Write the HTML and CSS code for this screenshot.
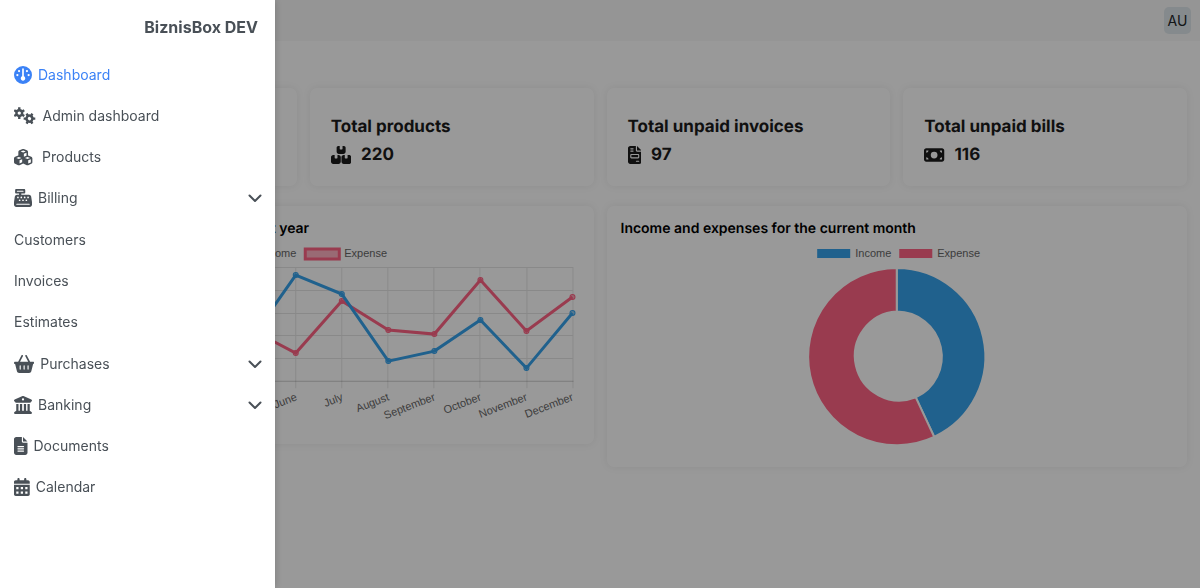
FILE: index.html
```html
<!DOCTYPE html>
<html lang="en">
<head>
<meta charset="utf-8">
<title>BiznisBox DEV</title>
<meta name="viewport" content="width=device-width, initial-scale=1">
<link rel="stylesheet" href="styles.css">
</head>
<body>
<div class="page">
  <header class="topbar">
    <button class="avatar" type="button" aria-label="Account AU">AU</button>
  </header>
  <main class="content">
    <section class="stats">
      <article class="card stat"></article>
      <article class="card stat">
        <h2 class="stat-title">Total products</h2>
        <p class="stat-value"><svg class="icon" viewBox="0 0 576 512" aria-hidden="true"><path d="M248 0H208C181.500 0 160 21.500 160 48V160c0 35.300 28.700 64 64 64H352c35.300 0 64-28.700 64-64V48c0-26.500-21.500-48-48-48H328V80c0 8.800-7.200 16-16 16H264c-8.800 0-16-7.200-16-16V0zM64 256c-35.300 0-64 28.700-64 64V448c0 35.300 28.700 64 64 64H214c35.300 0 64-28.700 64-64V320c0-35.300-28.700-64-64-64H184v80c0 8.800-7.200 16-16 16H120c-8.800 0-16-7.200-16-16V256H64zM362 512H512c35.300 0 64-28.700 64-64V320c0-35.300-28.700-64-64-64H472v80c0 8.800-7.200 16-16 16H408c-8.800 0-16-7.200-16-16V256H362c-35.300 0-64 28.700-64 64V448c0 35.300 28.700 64 64 64z"/></svg>220</p>
      </article>
      <article class="card stat">
        <h2 class="stat-title">Total unpaid invoices</h2>
        <p class="stat-value"><svg class="icon" viewBox="0 0 384 512" aria-hidden="true"><path fill-rule="evenodd" d="M64 0C28.700 0 0 28.700 0 64V448c0 35.300 28.700 64 64 64H320c35.300 0 64-28.700 64-64V160H256c-17.700 0-32-14.300-32-32V0H64zM256 0V128H384L256 0zM80 64h64a16 16 0 0 1 0 32H80a16 16 0 0 1 0-32zM80 128h64a16 16 0 0 1 0 32H80a16 16 0 0 1 0-32zM96 224H288c17.700 0 32 14.300 32 32v64c0 17.700-14.300 32-32 32H96c-17.700 0-32-14.300-32-32V256c0-17.700 14.300-32 32-32zM96 256v64H288V256H96zM240 416h64a16 16 0 0 1 0 32H240a16 16 0 0 1 0-32z"/></svg>97</p>
      </article>
      <article class="card stat">
        <h2 class="stat-title">Total unpaid bills</h2>
        <p class="stat-value"><svg class="icon" viewBox="0 0 576 512" aria-hidden="true"><path fill-rule="evenodd" d="M64 64C28.700 64 0 92.700 0 128V384c0 35.300 28.700 64 64 64H512c35.300 0 64-28.700 64-64V128c0-35.300-28.700-64-64-64H64zM128 384H64V320c35.300 0 64 28.700 64 64zM64 192V128h64c0 35.300-28.700 64-64 64zM448 384c0-35.300 28.700-64 64-64v64H448zM512 192c-35.300 0-64-28.700-64-64h64v64zM288 160a96 96 0 1 1 0 192 96 96 0 1 1 0-192z"/></svg>116</p>
      </article>
    </section>

    <section class="charts">
      <article class="card chart">
        <h2 class="chart-title">Income and expenses for the current year</h2>
        <svg class="plot" viewBox="0 0 552 190" role="img" aria-label="Income and expenses by month">
          <g class="legend">
            <rect class="key income" x="194" y="9" width="34" height="10"/>
            <text x="233" y="17">Income</text>
            <rect class="key expense" x="278" y="9" width="34" height="10"/>
            <text x="317" y="17">Expense</text>
          </g>
          <path class="grid" d="M38 27.500H546M38 50.500H546M38 73.500H546M38 95.500H546M38 118.500H546M84.500 27V148M130.500 27V148M176.500 27V148M222.500 27V148M268.500 27V148M314.500 27V148M360.500 27V148M406.500 27V148M452.500 27V148M499.500 27V148M545.500 27V148"/>
          <path class="grid axis" d="M38 141H546M38.500 27V148"/>
          <polyline class="line expense" points="38,80 84,62 130,96 176,70 223,89 268.500,113 314.500,61 361,90 407,94 453,40 499,91 545,57"/>
          <g class="dots expense"><circle cx="268.500" cy="113" r="2.500"/><circle cx="314.500" cy="61" r="2.500"/><circle cx="361" cy="90" r="2.500"/><circle cx="407" cy="94" r="2.500"/><circle cx="453" cy="40" r="2.500"/><circle cx="499" cy="91" r="2.500"/><circle cx="545" cy="57" r="2.500"/></g>
          <polyline class="line income" points="38,110 84,90 130,70 176,104 223,100 268.500,35 314.500,54 361,121 407,111 453,80 499,128 545,73"/>
          <g class="dots income"><circle cx="268.500" cy="35" r="2.500"/><circle cx="314.500" cy="54" r="2.500"/><circle cx="361" cy="121" r="2.500"/><circle cx="407" cy="111" r="2.500"/><circle cx="453" cy="80" r="2.500"/><circle cx="499" cy="128" r="2.500"/><circle cx="545" cy="73" r="2.500"/></g>
          <g class="months">
            <text transform="translate(269 156) rotate(-21)" y="4">June</text>
            <text transform="translate(315 156) rotate(-21)" y="4">July</text>
            <text transform="translate(361 156) rotate(-21)" y="4">August</text>
            <text transform="translate(407 156) rotate(-21)" y="4">September</text>
            <text transform="translate(453 156) rotate(-21)" y="4">October</text>
            <text transform="translate(499 156) rotate(-21)" y="4">November</text>
            <text transform="translate(545 156) rotate(-21)" y="4">December</text>
          </g>
        </svg>
      </article>
      <article class="card chart">
        <h2 class="chart-title">Income and expenses for the current month</h2>
        <svg class="plot" viewBox="0 0 552 213" role="img" aria-label="Income and expenses this month">
          <g class="legend">
            <rect class="fill income" x="196" y="9" width="33" height="9"/>
            <text x="234" y="17">Income</text>
            <rect class="fill expense" x="278" y="9" width="33" height="9"/>
            <text x="316" y="17">Expense</text>
          </g>
          <path class="slice income" d="M275.500 28A88.500 88.500 0 0 1 312.900 196.700L294.500 157.300A45 45 0 0 0 275.500 71.500Z"/>
          <path class="slice expense" d="M275.500 28A88.500 88.500 0 1 0 312.900 196.700L294.500 157.300A44.500 44.500 0 1 1 275.500 71.500Z"/>
        </svg>
      </article>
    </section>
  </main>
</div>

<div class="scrim"></div>

<aside class="sidebar">
  <h1 class="brand">BiznisBox DEV</h1>
  <nav class="menu">
    <a class="item active" href="#dashboard"><svg class="icon" viewBox="0 0 512 512" aria-hidden="true"><path fill-rule="evenodd" d="M0 256a256 256 0 1 1 512 0A256 256 0 1 1 0 256zM320 352c0-26.900-16.500-49.900-40-59.300V88c0-13.300-10.700-24-24-24s-24 10.700-24 24V292.700c-23.500 9.500-40 32.500-40 59.300c0 35.300 28.700 64 64 64s64-28.700 64-64zM144 176a32 32 0 1 0 0-64 32 32 0 1 0 0 64zM128 256a32 32 0 1 0-64 0 32 32 0 1 0 64 0zM416 288a32 32 0 1 0 0-64 32 32 0 1 0 0 64zM400 144a32 32 0 1 0-64 0 32 32 0 1 0 64 0z"/></svg>Dashboard</a>
    <a class="item" href="#admin"><svg class="icon" viewBox="0 0 640 512" aria-hidden="true"><g class="gear"><circle cx="150" cy="173" r="82"/><path d="M150 8V80M150 266V338M7 90L70 127M230 219L293 256M7 256L70 219M230 127L293 90"/><g transform="translate(290 158) rotate(30 150 173)"><circle cx="150" cy="173" r="82"/><path d="M150 8V80M150 266V338M7 90L70 127M230 219L293 256M7 256L70 219M230 127L293 90"/></g></g></svg>Admin dashboard</a>
    <a class="item" href="#products"><svg class="icon" viewBox="0 -30 690 564" aria-hidden="true"><path fill-rule="evenodd" d="M290.800 48.600l78.400 29.700L288 109.500 206.800 78.300l78.400-29.700c1.800-.7 3.800-.7 5.700 0zM136 92.500V204.700c-1.300 .4-2.600 .8-3.900 1.300l-96 36.400C14.400 250.600 0 271.500 0 294.700V413.900c0 22.200 13.100 42.300 33.500 51.300l96 42.200c14.400 6.300 30.700 6.300 45.100 0L288 457.500l113.500 49.900c14.400 6.300 30.700 6.300 45.100 0l96-42.200c20.300-8.900 33.500-29.100 33.500-51.300V294.700c0-23.300-14.400-44.100-36.100-52.400l-96-36.400c-1.300-.5-2.600-.9-3.900-1.300V92.500c0-23.300-14.400-44.100-36.100-52.400l-96-36.400c-12.800-4.800-26.900-4.800-39.700 0l-96 36.400C150.400 48.400 136 69.300 136 92.500zM392 210.600l-82.400 31.200V152.600L392 121v89.600zM154.800 250.900l78.400 29.700L152 311.700 70.800 280.600l78.400-29.700c1.800-.7 3.800-.7 5.700 0zM173.600 455.300V354.800L256 323.200v95.900l-82.400 36.200zM421.200 250.900c1.800-.7 3.800-.7 5.700 0l78.400 29.700L424 311.700l-81.200-31.100 78.400-29.700zM523.200 421.200l-77.600 34.100V354.800L528 323.200v90.700c0 3.200-1.900 6-4.800 7.300z"/></svg>Products</a>
    <button class="item" type="button" aria-expanded="true"><svg class="icon" viewBox="0 0 512 512" aria-hidden="true"><path fill-rule="evenodd" d="M64 0C46.300 0 32 14.300 32 32V96c0 17.700 14.300 32 32 32h80v32H87c-31.600 0-58.500 23.100-63.300 54.400L1.100 364.100C.4 368.800 0 373.600 0 378.400V448c0 35.300 28.700 64 64 64H448c35.300 0 64-28.700 64-64V378.400c0-4.800-.4-9.600-1.100-14.400L488.200 214.400C483.500 183.100 456.600 160 425 160H208V128h80c17.700 0 32-14.300 32-32V32c0-17.700-14.300-32-32-32H64zM96 48H256a16 16 0 0 1 0 32H96a16 16 0 0 1 0-32zM80 416H432a16 16 0 0 1 0 32H80a16 16 0 0 1 0-32zM112 264a24 24 0 1 1 0-48 24 24 0 1 1 0 48zM232 240a24 24 0 1 1-48 0 24 24 0 1 1 48 0zM160 344a24 24 0 1 1 0-48 24 24 0 1 1 0 48zM328 240a24 24 0 1 1-48 0 24 24 0 1 1 48 0zM256 344a24 24 0 1 1 0-48 24 24 0 1 1 0 48zM424 240a24 24 0 1 1-48 0 24 24 0 1 1 48 0zM352 344a24 24 0 1 1 0-48 24 24 0 1 1 0 48z"/></svg>Billing<svg class="chevron" viewBox="0 0 14 14" aria-hidden="true"><path d="M1.500 4.500L7 10L12.500 4.500"/></svg></button>
    <div class="submenu">
      <a class="item" href="#customers">Customers</a>
      <a class="item" href="#invoices">Invoices</a>
      <a class="item" href="#estimates">Estimates</a>
    </div>
    <button class="item" type="button" aria-expanded="false"><svg class="icon" viewBox="0 0 576 512" aria-hidden="true"><path fill-rule="evenodd" d="M253.300 35.100c6.100-11.800 1.500-26.300-10.200-32.400s-26.300-1.500-32.400 10.200L117.600 192H32c-17.700 0-32 14.300-32 32s14.300 32 32 32L83.900 463.500C91 492 116.600 512 146 512H430c29.400 0 55-20 62.100-48.500L544 256c17.700 0 32-14.300 32-32s-14.300-32-32-32H458.400L365.300 12.900C359.200 1.200 344.700-3.400 332.900 2.700s-16.300 20.600-10.200 32.400L404.300 192H171.700L253.300 35.100zM192 304v96a16 16 0 0 1-32 0V304a16 16 0 0 1 32 0zM304 304v96a16 16 0 0 1-32 0V304a16 16 0 0 1 32 0zM416 304v96a16 16 0 0 1-32 0V304a16 16 0 0 1 32 0z"/></svg>Purchases<svg class="chevron" viewBox="0 0 14 14" aria-hidden="true"><path d="M1.500 4.500L7 10L12.500 4.500"/></svg></button>
    <button class="item" type="button" aria-expanded="false"><svg class="icon" viewBox="0 0 512 512" aria-hidden="true"><path fill-rule="evenodd" d="M243.400 2.600l-224 96c-14 6-21.800 21-18.700 35.800S16.800 160 32 160v8c0 13.300 10.700 24 24 24H456c13.300 0 24-10.700 24-24v-8c15.200 0 28.300-10.700 31.300-25.600s-4.800-29.900-18.700-35.800l-224-96c-8-3.400-17.200-3.400-25.200 0zM128 224H64V420.300c-.6 .3-1.200 .7-1.800 1.100l-48 32c-11.700 7.800-17 22.400-12.900 35.900S17.900 512 32 512H480c14.100 0 26.500-9.200 30.600-22.700s-1.100-28.100-12.900-35.900l-48-32c-.6-.4-1.200-.7-1.800-1.100V224H384V416H344V224H280V416H232V224H168V416H128V224zM256 64a32 32 0 1 1 0 64 32 32 0 1 1 0-64z"/></svg>Banking<svg class="chevron" viewBox="0 0 14 14" aria-hidden="true"><path d="M1.500 4.500L7 10L12.500 4.500"/></svg></button>
    <a class="item" href="#documents"><svg class="icon" viewBox="0 0 384 512" aria-hidden="true"><path fill-rule="evenodd" d="M64 0C28.700 0 0 28.700 0 64V448c0 35.300 28.700 64 64 64H320c35.300 0 64-28.700 64-64V160H256c-17.700 0-32-14.300-32-32V0H64zM256 0V128H384L256 0zM112 256H272a16 16 0 0 1 0 32H112a16 16 0 0 1 0-32zM112 320H272a16 16 0 0 1 0 32H112a16 16 0 0 1 0-32zM112 384H272a16 16 0 0 1 0 32H112a16 16 0 0 1 0-32z"/></svg>Documents</a>
    <a class="item" href="#calendar"><svg class="icon" viewBox="0 0 448 512" aria-hidden="true"><path fill-rule="evenodd" d="M128 0c17.700 0 32 14.300 32 32V64H288V32c0-17.700 14.300-32 32-32s32 14.300 32 32V64h48c26.500 0 48 21.500 48 48v48H0V112C0 85.500 21.500 64 48 64H96V32c0-17.700 14.300-32 32-32zM0 192H448V464c0 26.500-21.500 48-48 48H48c-26.500 0-48-21.500-48-48V192zM64 256h64v64H64zM192 256h64v64H192zM320 256h64v64H320zM64 384h64v64H64zM192 384h64v64H192zM320 384h64v64H320z"/></svg>Calendar</a>
  </nav>
</aside>
</body>
</html>
```
FILE: styles.css
```css
* { box-sizing: border-box; }

body {
  margin: 0;
  background: #fff;
  color: #212529;
  font: 14px/21px Inter, "Liberation Sans", sans-serif;
}

h1, h2, p { margin: 0; }

button {
  border: 0;
  color: inherit;
  font: inherit;
  cursor: pointer;
}

.icon { height: 18px; fill: currentColor; flex: none; }

/* Page behind the drawer */
.page { min-height: 100vh; }

.topbar {
  display: flex;
  justify-content: flex-end;
  padding: 7px 9px;
  background: #f8f8f8;
}

.avatar {
  width: 27px;
  height: 27px;
  padding: 0;
  border-radius: 5px;
  background: #dee6eb;
}

.content {
  display: grid;
  gap: 20px;
  padding: 47px 13px 13px;
}

.stats {
  display: grid;
  grid-template-columns: repeat(4, 1fr);
  gap: 13px;
}

.charts {
  display: grid;
  grid-template-columns: repeat(2, 1fr);
  align-items: start;
  gap: 13px;
}

.card {
  border-radius: 7px;
  background: #fff;
  box-shadow: 0 0 8px rgba(0, 0, 0, 0.07);
}

.stat { padding: 25px 21px 17px; }

.stat-title, .stat-value {
  color: #1c1c1c;
  font-size: 17px;
  font-weight: 700;
  line-height: 28px;
  text-rendering: geometricPrecision;
}

.stat-value {
  display: flex;
  align-items: center;
  gap: 10px;
}

.chart { padding: 14px; }

.chart-title {
  padding-bottom: 3px;
  font-size: 14px;
  font-weight: 600;
  line-height: 17px;
  color: #000;
  text-rendering: geometricPrecision;
}

.plot {
  display: block;
  width: 100%;
  height: auto;
  fill: #666;
  font: 11px "Liberation Sans", Arial, sans-serif;
}

.months { text-anchor: end; }
.grid { fill: none; stroke: rgba(0, 0, 0, 0.1); }
.axis { stroke: rgba(0, 0, 0, 0.2); }
.line { fill: none; stroke-width: 3; }
.line.income, .key.income, .dots.income { stroke: #36a2eb; }
.line.expense, .key.expense, .dots.expense { stroke: #ff6384; }
.key { stroke-width: 3; fill-opacity: 0.5; }
.dots { fill-opacity: 0.5; }
.fill.income, .slice.income, .key.income, .dots.income { fill: #36a2eb; }
.fill.expense, .slice.expense, .key.expense, .dots.expense { fill: #ff6384; }
.line { fill: none; }
.slice { stroke: #fff; stroke-width: 2; }

.scrim {
  position: fixed;
  inset: 0;
  background: rgba(0, 0, 0, 0.4);
}

/* Drawer */
.sidebar {
  position: fixed;
  inset: 0 auto 0 0;
  width: 275px;
  overflow: auto;
  padding: 14px 0;
  background: #fff;
  color: #495057;
  box-shadow: 0 0 8px rgba(0, 0, 0, 0.2);
}

.brand {
  padding: 0 17px 0 14px;
  font-size: 16px;
  font-weight: 700;
  line-height: 26px;
  text-align: right;
}

.menu {
  display: grid;
  padding-top: 14px;
}

.submenu { padding: 1px 0; }

.item {
  display: flex;
  align-items: center;
  gap: 6px;
  width: 100%;
  height: 41px;
  padding: 0 13px 0 14px;
  background: none;
  color: inherit;
  text-align: left;
  text-decoration: none;
}

.item.active { color: #3b82f6; }

.gear { fill: none; stroke: currentColor; stroke-width: 68; }

.chevron {
  width: 14px;
  height: 14px;
  margin-left: auto;
  fill: none;
  stroke: currentColor;
  stroke-width: 2;
  stroke-linecap: round;
  stroke-linejoin: round;
}
```
